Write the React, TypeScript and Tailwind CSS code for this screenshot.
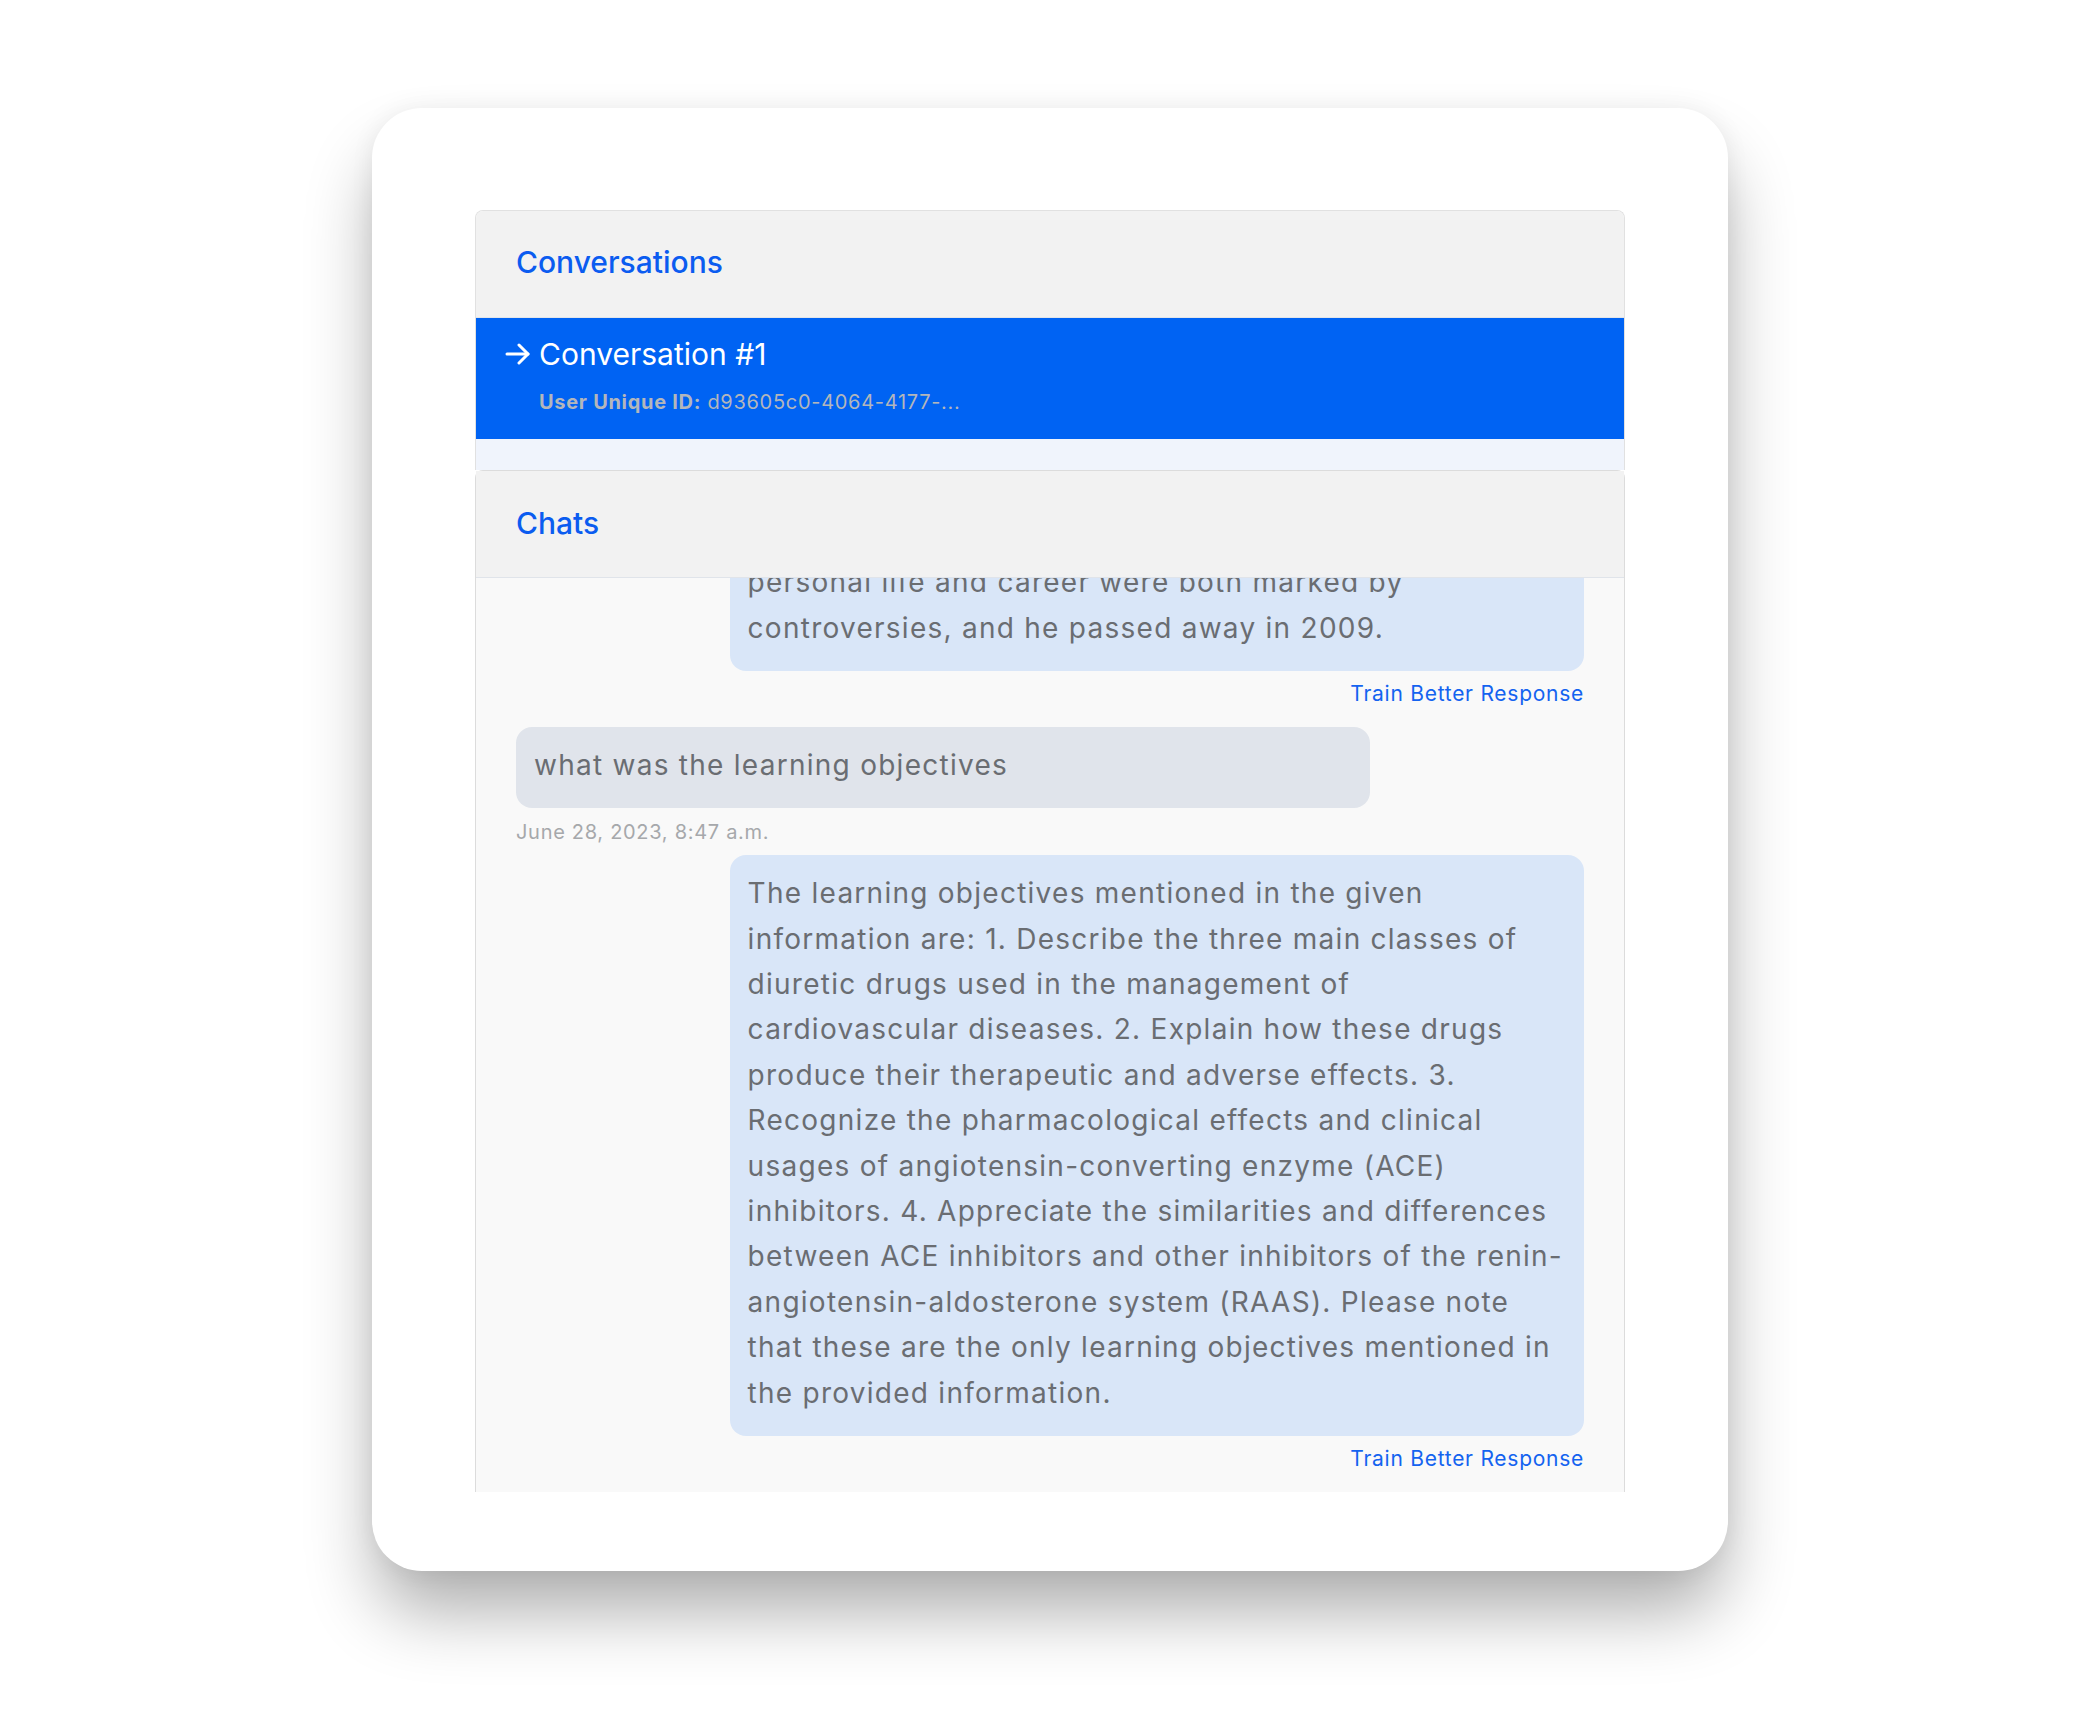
import React from "react";

const font = { fontFamily: "Inter, 'Noto Sans', sans-serif" };

type Msg = { question: string; time: string; answer: string[] };

// answers are kept as the lines the chat bubble shows
const messages: Msg[] = [
  {
    question: "who was michael jackson",
    time: "June 28, 2023, 8:45 a.m.",
    answer: [
      "Michael Jackson was a famous American entertainer. His",
      "personal life and career were both marked by",
      "controversies, and he passed away in 2009.",
    ],
  },
  {
    question: "what was the learning objectives",
    time: "June 28, 2023, 8:47 a.m.",
    answer: [
      "The learning objectives mentioned in the given",
      "information are: 1. Describe the three main classes of",
      "diuretic drugs used in the management of",
      "cardiovascular diseases. 2. Explain how these drugs",
      "produce their therapeutic and adverse effects. 3.",
      "Recognize the pharmacological effects and clinical",
      "usages of angiotensin-converting enzyme (ACE)",
      "inhibitors. 4. Appreciate the similarities and differences",
      "between ACE inhibitors and other inhibitors of the renin-",
      "angiotensin-aldosterone system (RAAS). Please note",
      "that these are the only learning objectives mentioned in",
      "the provided information.",
    ],
  },
];

function ArrowIcon() {
  return (
    <svg width="26" height="22" viewBox="0 0 26 22" fill="none" stroke="currentColor" strokeWidth="3" strokeLinecap="round" strokeLinejoin="round">
      <path d="M2 11h21" />
      <path d="M14 2l9 9-9 9" />
    </svg>
  );
}

function ChatPair({ m }: { m: Msg }) {
  return (
    <div className="flex flex-col">
      {/* user question */}
      <div className="w-4/5 rounded-[16px] bg-[#e0e4eb] px-[18px] pt-4 pb-5 text-[28px] leading-[45px] tracking-[0.045em] text-[#6a6d72]">
        {m.question}
      </div>
      <div className="mt-[10px] text-[20px] leading-[28px] tracking-[0.035em] text-[#a6a8ab]">{m.time}</div>

      {/* bot answer */}
      <div className="mt-[9px] ml-auto w-4/5 whitespace-nowrap rounded-[16px] bg-[#d9e6f8] px-[18px] pt-4 pb-5 text-[28px] leading-[45.4px] tracking-[0.045em] text-[#6a6d72]">
        {m.answer.map((line, i) => (
          <React.Fragment key={i}>
            {line}
            {i < m.answer.length - 1 && <br />}
          </React.Fragment>
        ))}
      </div>
      <a className="mt-[9px] self-end text-[21px] leading-[28px] tracking-[0.035em] text-[#1463f0]" href="#">
        Train Better Response
      </a>
    </div>
  );
}

export default function App() {
  return (
    <div className="flex min-h-screen justify-center bg-white pt-[108px]" style={font}>
      <div className="h-[1463px] w-[1356px] rounded-[50px] bg-white px-[103px] pt-[102px] shadow-[0_45px_70px_-5px_rgba(0,0,0,0.32),0_0_24px_rgba(0,0,0,0.06)]">
        {/* Conversations */}
        <section className="overflow-hidden rounded-t-[8px] border-x border-t border-[#e1e1e1]">
          <div className="flex h-[107px] items-center border-b border-[#e2e5ea] bg-[#f2f2f2] pb-[4px] pl-[40px]">
            <h2 className="text-[30px] font-medium text-[#0b5cf0]">Conversations</h2>
          </div>
          <div className="bg-[#f0f4fc] pb-[31px]">
            <div className="h-[121px] bg-[#0063f3] pl-[29px] pt-[17px]">
              <div className="flex items-center gap-[8px] text-white">
                <ArrowIcon />
                <span className="text-[30px] leading-[38px]">Conversation #1</span>
              </div>
              <div className="mt-[15px] pl-[34px] text-[20px] leading-[28px] tracking-[0.035em] text-[#b3b6bb]">
                <span className="font-bold">User Unique ID:</span> d93605c0-4064-4177-...
              </div>
            </div>
          </div>
        </section>

        {/* Chats */}
        <section className="rounded-t-[8px] border-x border-t border-[#dcdcdc]">
          <div className="flex h-[107px] items-center border-b border-[#e0e4ea] bg-[#f2f2f2] pb-[2px] pl-[40px]">
            <h2 className="text-[30px] font-medium text-[#0b5cf0]">Chats</h2>
          </div>
          <div className="flex h-[914px] flex-col justify-end gap-[19px] overflow-hidden bg-[#f9f9f9] px-[40px] pb-[19px]">
            {messages.map((m, i) => (
              <ChatPair key={i} m={m} />
            ))}
          </div>
        </section>
      </div>
    </div>
  );
}
